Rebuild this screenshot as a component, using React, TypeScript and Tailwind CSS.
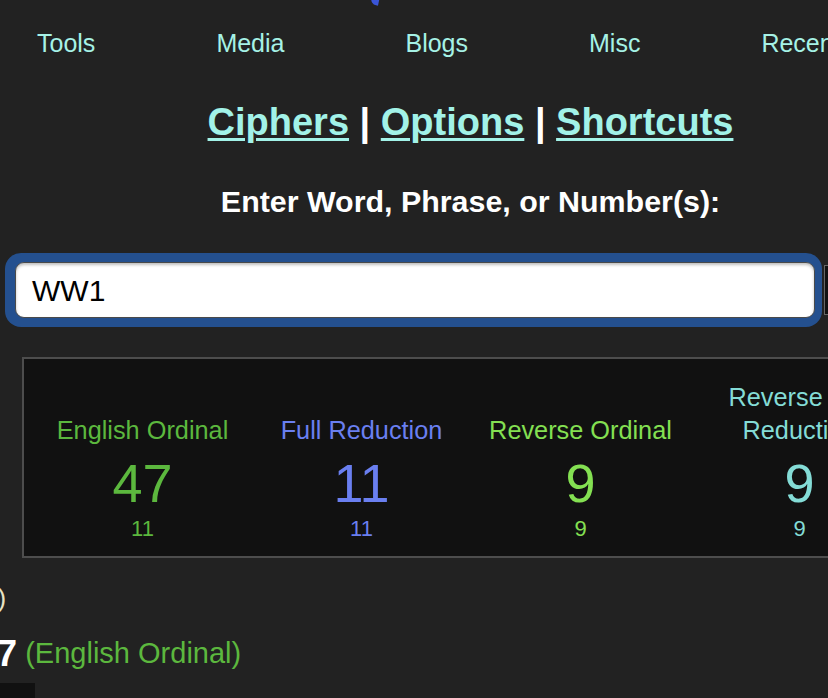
import React from "react";

const cols = [
  { label: "English Ordinal", big: "47", small: "11", color: "text-[#5cb83e]" },
  { label: "Full Reduction", big: "11", small: "11", color: "text-[#6a7ff0]" },
  { label: "Reverse Ordinal", big: "9", small: "9", color: "text-[#84e052]" },
  { label: "Reverse Full Reduction", big: "9", small: "9", color: "text-[#84dcd6]" },
];

export default function App() {
  return (
    <div
      className="relative w-[828px] h-[698px] overflow-hidden bg-[#222222]"
      style={{ fontFamily: '"Liberation Sans", Arial, sans-serif' }}
    >
      <div className="absolute left-[371px] top-[-4px] w-[8px] h-[9px] rounded-bl-[6px] bg-[#3a55d8] rotate-12" />
      <div className="w-[941px]">
        {/* nav */}
        <div className="h-[88px] flex items-center pl-[37px] gap-[121px] text-[25px] text-[#a6f2e6]">
          <span>Tools</span>
          <span>Media</span>
          <span>Blogs</span>
          <span>Misc</span>
          <span>Recent</span>
        </div>
        {/* links */}
        <div className="h-[68px] flex items-center justify-center text-[38px] font-bold text-white whitespace-pre">
          <span className="underline underline-offset-[3px] decoration-[3px] text-[#a2f2e8]">Ciphers</span>
          <span> | </span>
          <span className="underline underline-offset-[3px] decoration-[3px] text-[#a2f2e8]">Options</span>
          <span> | </span>
          <span className="underline underline-offset-[3px] decoration-[3px] text-[#a2f2e8]">Shortcuts</span>
        </div>
        <div className="h-[92px] flex items-center justify-center text-[30.4px] font-bold text-white">
          Enter Word, Phrase, or Number(s):
        </div>
        {/* input */}
        <div className="mt-[5px] flex items-center">
          <div className="ml-[5px] w-[817px] h-[74px] rounded-[16px] bg-[#24508f] pl-[10px] pr-[7px] py-[9px]">
            <div className="h-full rounded-[9px] bg-white border border-[#4a4a4a] shadow-[inset_0_2px_3px_rgba(0,0,0,0.25)] flex items-center pl-[16px] text-[30px] text-black">
              WW1
            </div>
          </div>
          <div className="ml-[2px] w-[20px] h-[50px] bg-[#111] border border-[#666]" />
        </div>
        {/* results */}
        <div className="mt-[30px] ml-[22px] w-[897px] h-[201px] border-2 border-[#4d4d4d] bg-[#111111] pt-[22px] pl-[9px] flex">
          {cols.map((c) => (
            <div key={c.label} className={`w-[219px] flex flex-col items-center ${c.color}`}>
              <div className="h-[66px] flex items-end justify-center text-center text-[25.3px] leading-[33px] px-[2px]">
                {c.label}
              </div>
              <div className="mt-[8px] h-[56px] leading-[56px] text-[54px]">{c.big}</div>
              <div className="mt-[6px] h-[24px] leading-[24px] text-[22px]">{c.small}</div>
            </div>
          ))}
        </div>
        {/* below */}
        <div className="mt-[20px] h-[40px] flex items-center ml-[-53px] text-[26px] text-[#e8e4c4] whitespace-pre">
          (abc)
        </div>
        <div className="mt-[16px] h-[40px] flex items-center ml-[-24px] whitespace-pre">
          <span className="text-[37px] font-bold text-white">47</span>
          <span className="text-[29px] text-[#5cb83e]"> (English Ordinal)</span>
        </div>
        <div className="mt-[9px] w-[35px] h-[20px] bg-[#111]" />
      </div>
    </div>
  );
}
